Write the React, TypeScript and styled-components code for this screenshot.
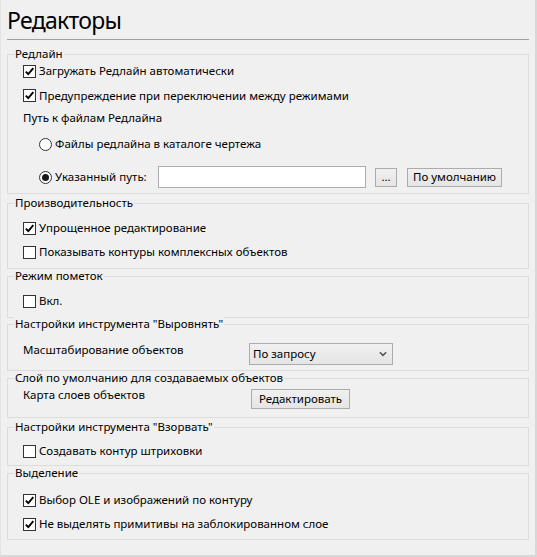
import React from 'react';
import styled, { createGlobalStyle } from 'styled-components';

const GlobalStyle = createGlobalStyle`
  html, body {
    margin: 0;
    padding: 0;
    background: #f0f0f0;
  }
  body {
    font-family: "Noto Sans", "Open Sans", sans-serif;
    font-size: 11.5px;
    color: #000;
  }
`;

const Frame = styled.div`
  box-sizing: border-box;
  width: 537px;
  height: 557px;
  background: #f0f0f0;
  border-left: 1px solid #e3e3e3;
  border-right: 2px solid #d8d8d8;
  border-bottom: 2px solid #d8d8d8;
  padding: 0 6px;
  display: flex;
  flex-direction: column;
`;

const Title = styled.h1`
  margin: 4px 0 0;
  padding: 0 0 3px 0;
  font-weight: 400;
  font-size: 23px;
  letter-spacing: -0.7px;
  line-height: 32px;
  border-bottom: 1px solid #a0a0a0;
`;

const Group = styled.section<{ $space: number }>`
  border: 1px solid #dcdcdc;
  margin-top: ${p => p.$space}px;
  display: flex;
  flex-direction: column;
`;

const Caption = styled.div`
  align-self: flex-start;
  margin: -8px 0 -6px 6px;
  padding: 0 1px;
  line-height: 14px;
  background: #f0f0f0;
`;

const Body = styled.div<{ $pt: number; $pb: number }>`
  padding: ${p => p.$pt}px 0 ${p => p.$pb}px 15px;
  display: flex;
  flex-direction: column;
`;

const Row = styled.div<{ $h: number; $indent?: number; $top?: boolean }>`
  display: flex;
  align-items: ${p => (p.$top ? 'flex-start' : 'center')};
  height: ${p => p.$h}px;
  padding-left: ${p => p.$indent ?? 0}px;
`;

const Box = styled.span`
  box-sizing: border-box;
  width: 13px;
  height: 13px;
  border: 1px solid #333;
  background: #fff;
  display: inline-flex;
  align-items: center;
  justify-content: center;
  flex-shrink: 0;
`;

const Round = styled.span<{ $checked: boolean }>`
  box-sizing: border-box;
  width: 13px;
  height: 13px;
  border: 1px solid #333;
  border-radius: 50%;
  background: #fff;
  flex-shrink: 0;

  &::after {
    content: '';
    display: ${p => (p.$checked ? 'block' : 'none')};
    width: 7px;
    height: 7px;
    margin: 2px;
    border-radius: 50%;
    background: #1a1a1a;
  }
`;

const OptionLabel = styled.label<{ $w?: number }>`
  display: flex;
  align-items: center;
  gap: 3px;
  ${p => (p.$w ? `width: ${p.$w}px;` : '')}
  flex-shrink: 0;
  white-space: nowrap;
`;

const Text = styled.span<{ $w?: number }>`
  line-height: 16px;
  white-space: nowrap;
  ${p => (p.$w ? `width: ${p.$w}px; flex-shrink: 0;` : '')}
`;

const PathInput = styled.div`
  box-sizing: border-box;
  width: 208px;
  height: 22px;
  border: 1px solid #abadb3;
  background: #fff;
`;

const Button = styled.button<{ $w: number; $h: number; $gap?: number; $mt?: number }>`
  box-sizing: border-box;
  width: ${p => p.$w}px;
  height: ${p => p.$h}px;
  margin: ${p => p.$mt ?? 0}px 0 0 ${p => p.$gap ?? 0}px;
  padding: 0;
  border: 1px solid #acacac;
  background: linear-gradient(#f0f0f0, #e5e5e5);
  font: inherit;
  line-height: 16px;
  color: #000;
`;

const Select = styled.div`
  box-sizing: border-box;
  width: 144px;
  height: 22px;
  margin-top: 1px;
  border: 1px solid #acacac;
  background: linear-gradient(#f0f0f0, #e5e5e5);
  display: flex;
  align-items: center;
  justify-content: space-between;
  padding: 0 5px 0 3px;
  line-height: 16px;
`;

const Tick = () => (
  <svg width="11" height="11" viewBox="0 0 11 11">
    <path d="M1.8 5.6 L4.3 8.2 L9.3 2.2" fill="none" stroke="#000" strokeWidth="1.9" />
  </svg>
);

const Chevron = () => (
  <svg width="8" height="6" viewBox="0 0 8 6">
    <path d="M0.8 1.2 L4 4.4 L7.2 1.2" fill="none" stroke="#555" strokeWidth="1.5" />
  </svg>
);

const Check = ({ checked, children }: { checked: boolean; children: React.ReactNode }) => (
  <OptionLabel>
    <Box>{checked && <Tick />}</Box>
    <Text>{children}</Text>
  </OptionLabel>
);

const Radio = ({ checked, w, children }: { checked: boolean; w?: number; children: React.ReactNode }) => (
  <OptionLabel $w={w}>
    <Round $checked={checked} />
    <Text>{children}</Text>
  </OptionLabel>
);

export default function App() {
  return (
    <>
      <GlobalStyle />
      <Frame>
        <Title>Редакторы</Title>

        <Group $space={14}>
          <Caption>Редлайн</Caption>
          <Body $pt={4} $pb={0}>
            <Row $h={24}>
              <Check checked>Загружать Редлайн автоматически</Check>
            </Row>
            <Row $h={25}>
              <Check checked>Предупреждение при переключении между режимами</Check>
            </Row>
            <Row $h={19}>
              <Text>Путь к файлам Редлайна</Text>
            </Row>
            <Row $h={34} $indent={16}>
              <Radio checked={false}>Файлы редлайна в каталоге чертежа</Radio>
            </Row>
            <Row $h={32} $indent={16}>
              <Radio checked w={119}>Указанный путь:</Radio>
              <PathInput />
              <Button $w={22} $h={19} $gap={9}>...</Button>
              <Button $w={95} $h={19} $gap={10}>По умолчанию</Button>
            </Row>
          </Body>
        </Group>

        <Group $space={9}>
          <Caption>Производительность</Caption>
          <Body $pt={12} $pb={4}>
            <Row $h={24}>
              <Check checked>Упрощенное редактирование</Check>
            </Row>
            <Row $h={24}>
              <Check checked={false}>Показывать контуры комплексных объектов</Check>
            </Row>
          </Body>
        </Group>

        <Group $space={7}>
          <Caption>Режим пометок</Caption>
          <Body $pt={12} $pb={4}>
            <Row $h={24}>
              <Check checked={false}>Вкл.</Check>
            </Row>
          </Body>
        </Group>

        <Group $space={6}>
          <Caption>Настройки инструмента "Выровнять"</Caption>
          <Body $pt={17} $pb={4}>
            <Row $h={24} $top>
              <Text $w={226}>Масштабирование объектов</Text>
              <Select>
                <span>По запросу</span>
                <Chevron />
              </Select>
            </Row>
          </Body>
        </Group>

        <Group $space={7}>
          <Caption>Слой по умолчанию для создаваемых объектов</Caption>
          <Body $pt={8} $pb={8}>
            <Row $h={22} $top>
              <Text $w={228}>Карта слоев объектов</Text>
              <Button $w={99} $h={20} $mt={2}>Редактировать</Button>
            </Row>
          </Body>
        </Group>

        <Group $space={9}>
          <Caption>Настройки инструмента "Взорвать"</Caption>
          <Body $pt={11} $pb={2}>
            <Row $h={24}>
              <Check checked={false}>Создавать контур штриховки</Check>
            </Row>
          </Body>
        </Group>

        <Group $space={7}>
          <Caption>Выделение</Caption>
          <Body $pt={14} $pb={3}>
            <Row $h={24}>
              <Check checked>Выбор OLE и изображений по контуру</Check>
            </Row>
            <Row $h={24}>
              <Check checked>Не выделять примитивы на заблокированном слое</Check>
            </Row>
          </Body>
        </Group>
      </Frame>
    </>
  );
}
